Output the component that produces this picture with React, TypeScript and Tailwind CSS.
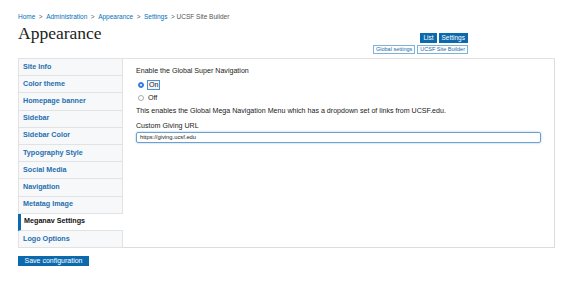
import React from "react";

const items = [
  "Site Info",
  "Color theme",
  "Homepage banner",
  "Sidebar",
  "Sidebar Color",
  "Typography Style",
  "Social Media",
  "Navigation",
  "Metatag Image",
  "Meganav Settings",
  "Logo Options",
];

export default function App() {
  return (
    <div className="w-[568px] h-[286px] bg-white overflow-hidden font-['Liberation_Sans',Arial,sans-serif] text-[#222]">
      <div className="pl-[18px] pr-[13px] pt-[12px]">
        <div className="text-[6.5px] leading-[9px] text-[#555] flex gap-[3.5px]">
          <span className="text-[#0071bc]">Home</span>
          <span>&gt;</span>
          <span className="text-[#0071bc]">Administration</span>
          <span>&gt;</span>
          <span className="text-[#0071bc]">Appearance</span>
          <span>&gt;</span>
          <span className="text-[#0071bc]">Settings</span>
          <span>&gt; UCSF Site Builder</span>
        </div>
        <div className="flex justify-between items-start h-[38px] border-b border-[#e2e2e2] w-[537px]">
          <h1 className="font-['Liberation_Serif',serif] text-[17.5px] leading-[22px] text-[#222] mt-[1px]">Appearance</h1>
          <div className="flex flex-col items-end gap-[2px] mr-[87px] mt-[12px]">
            <div className="flex gap-[2px]">
              <span className="bg-[#0b6aad] text-white text-[6.5px] leading-[10px] px-[3px]">List</span>
              <span className="bg-[#0b6aad] text-white text-[6.5px] leading-[10px] px-[3px]">Settings</span>
            </div>
            <div className="flex gap-[2px]">
              <span className="border border-[#7fb2d8] text-[#1b6aa8] text-[5.5px] leading-[7px] px-[2px]">Global settings</span>
              <span className="border border-[#7fb2d8] text-[#1b6aa8] text-[5.5px] leading-[7px] px-[2px]">UCSF Site Builder</span>
            </div>
          </div>
        </div>
        <div className="flex w-[537px]">
          <div className="w-[105px] flex flex-col">
            {items.map((it) => {
              const active = it === "Meganav Settings";
              return (
                <div
                  key={it}
                  className={
                    active
                      ? "h-[17.2px] flex items-center bg-white border-l-[3px] border-[#0b6aad] pl-[3px] text-[7.2px] font-bold text-[#111] border-b border-b-[#e2e2e2]"
                      : "h-[17.2px] flex items-center bg-[#f7f8f9] border-l border-r border-b border-[#e2e2e2] pl-[4px] text-[7.2px] font-bold text-[#1f6fae]"
                  }
                >
                  {it}
                </div>
              );
            })}
          </div>
          <div className="flex-1 border-r border-b border-[#dcdcdc] h-[189px] pl-[13px] pr-[13px] pt-[8px] text-[7.1px] text-[#222]">
            <div className="leading-[9px]">Enable the Global Super Navigation</div>
            <div className="flex items-center mt-[3px] h-[11px]">
              <span className="w-[6px] h-[6px] rounded-full bg-[#2f7ee8] border border-[#2f7ee8] flex items-center justify-center ml-[2px]">
                <span className="w-[2px] h-[2px] rounded-full bg-white" />
              </span>
              <span className="ml-[3px] px-[1px] border border-[#4a90d9] leading-[8px] bg-[#f3f3f3]">On</span>
            </div>
            <div className="flex items-center mt-[2px] h-[11px]">
              <span className="w-[6px] h-[6px] rounded-full border border-[#aaa] bg-white ml-[2px]" />
              <span className="ml-[4px] leading-[8px]">Off</span>
            </div>
            <div className="mt-[4px] leading-[9px]">This enables the Global Mega Navigation Menu which has a dropdown set of links from UCSF.edu.</div>
            <div className="mt-[6px] leading-[9px]">Custom Giving URL</div>
            <div className="mt-[1px] h-[11px] border border-[#6e9fcf] rounded-[2px] shadow-[0_0_2px_#8ab8e6] flex items-center px-[3px] text-[5.8px]">
              https://giving.ucsf.edu
            </div>
          </div>
        </div>
        <div className="mt-[8px] flex">
          <span className="bg-[#0b6aad] text-white text-[7px] leading-[10px] w-[71px] text-center">Save configuration</span>
        </div>
      </div>
    </div>
  );
}
